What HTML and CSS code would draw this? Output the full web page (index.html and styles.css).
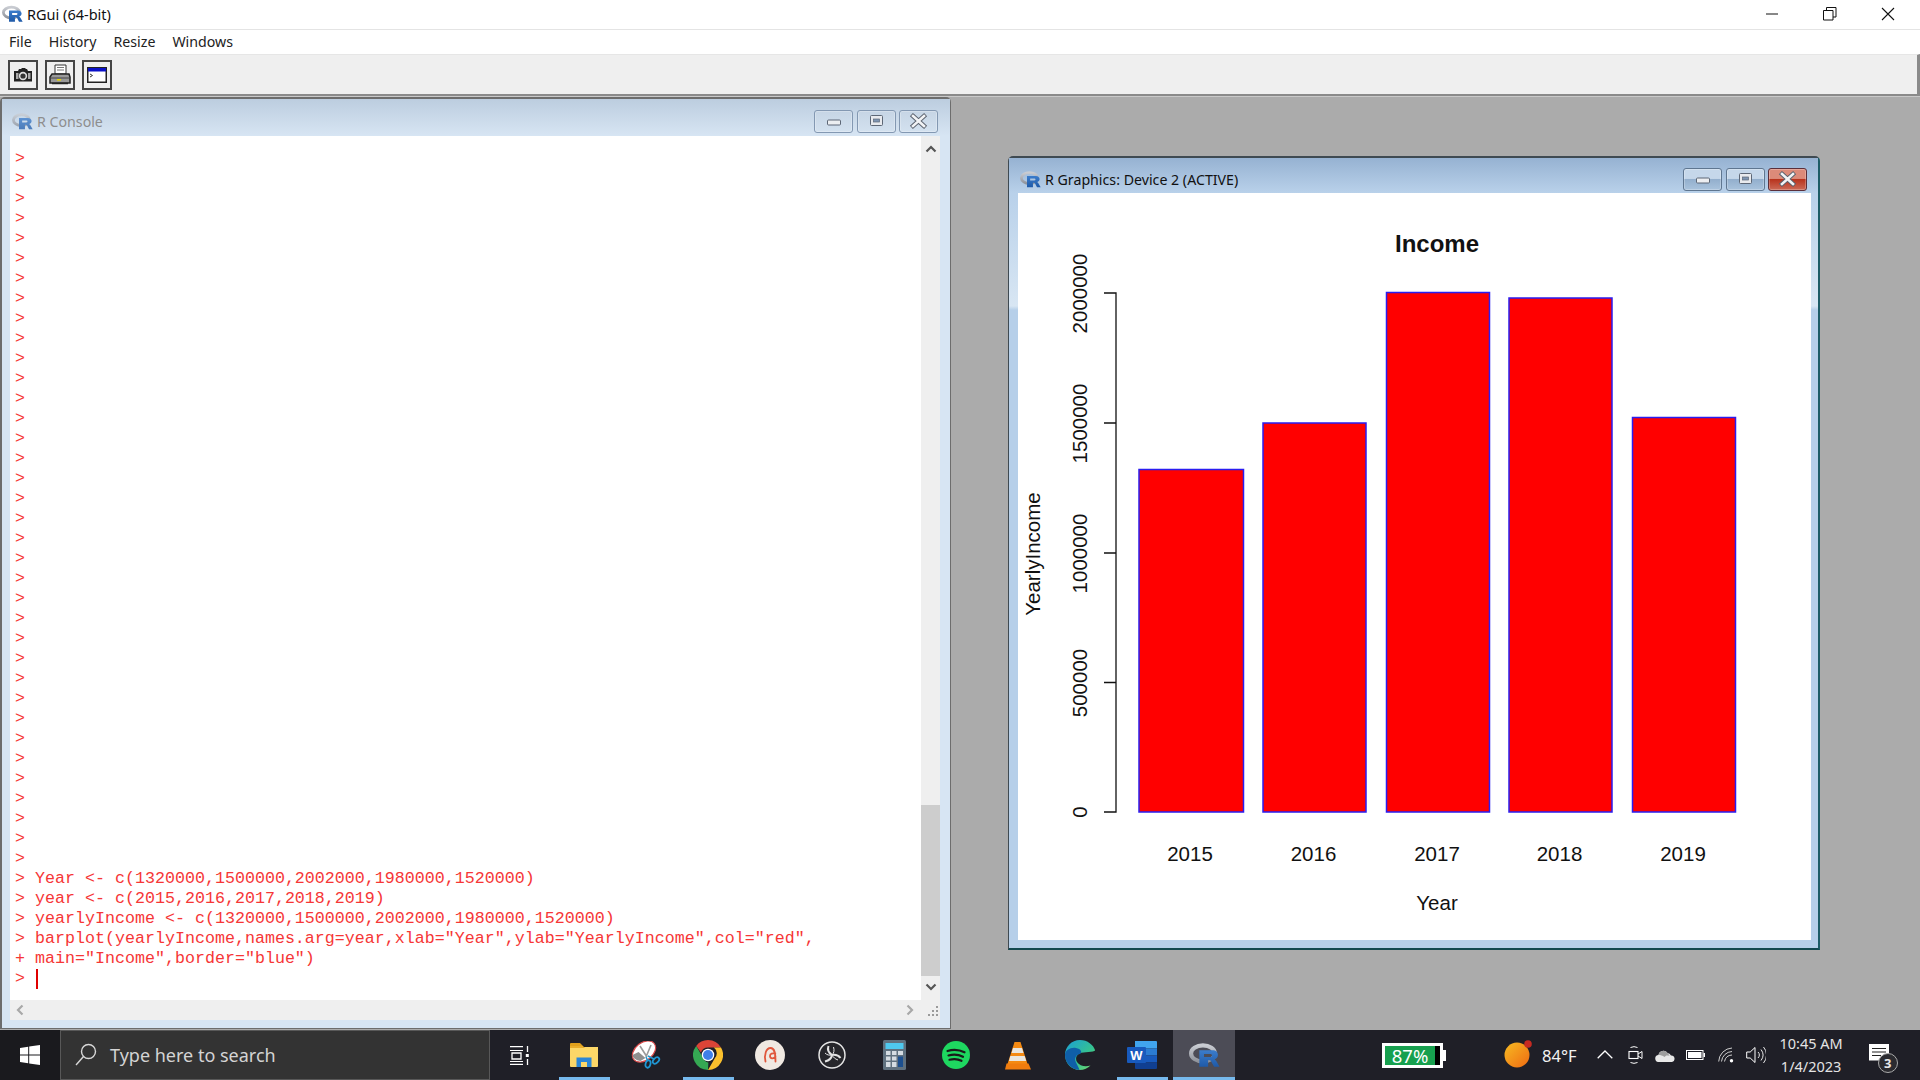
FILE: index.html
```html
<!DOCTYPE html>
<html lang="en">
<head>
<meta charset="utf-8">
<title>RGui (64-bit)</title>
<link rel="stylesheet" href="styles.css">
</head>
<body>
<svg class="defs" width="0" height="0" aria-hidden="true">
  <defs>
    <linearGradient id="ring" x1="0" y1="0" x2="0" y2="1"><stop offset="0" stop-color="#c9ccd2"/><stop offset="1" stop-color="#8f939b"/></linearGradient>
    <linearGradient id="blueR" x1="0" y1="0" x2="0" y2="1"><stop offset="0" stop-color="#3b7ccb"/><stop offset="1" stop-color="#1f5aa8"/></linearGradient>
    <symbol id="rlogo" viewBox="0 0 30 24">
      <ellipse cx="13.500" cy="10" rx="11.500" ry="7.800" fill="none" stroke="url(#ring)" stroke-width="4"/>
      <path fill="url(#blueR)" fill-rule="evenodd" d="M10 7h12.500c3.700 0 5.500 2 5.500 4.400 0 2.200-1.400 3.700-3.500 4.200 1 .5 1.600 1.300 2.200 2.300l2.800 5.100h-5.200l-2.600-4.800c-.6-1.100-1.200-1.500-2.200-1.500h-1v6.300H10V7zm4.500 3.500v2.900h5.700c1.200 0 2-.5 2-1.500 0-.9-.8-1.400-2-1.400z"/>
    </symbol>
    <symbol id="g-min" viewBox="0 0 39 23"><rect x="13.500" y="10" width="13" height="5" rx="1" fill="#eceef1" stroke="#5d6776"/></symbol>
    <symbol id="g-max" viewBox="0 0 39 23"><rect x="13.500" y="5.500" width="12" height="10" rx="1" fill="#e8eaee" stroke="#5d6776"/><rect x="16.500" y="9" width="6" height="3" fill="#7f95b3" stroke="#5d6776" stroke-width=".7"/></symbol>
    <symbol id="g-close" viewBox="0 0 39 23"><path d="M14 6l11 10M25 6L14 16" stroke="#59606c" stroke-width="4.400" stroke-linecap="square"/><path d="M14 6l11 10M25 6L14 16" stroke="#f2f3f5" stroke-width="2.600" stroke-linecap="square"/></symbol>
  </defs>
</svg>

<header class="app-title">
  <svg class="icon-app" aria-hidden="true"><use href="#rlogo"/></svg>
  <span class="app-name">RGui (64-bit)</span>
  <div class="caption-btns">
    <svg class="cap" width="14" height="14" viewBox="0 0 14 14" aria-hidden="true"><path d="M1 7h12" stroke="#111" stroke-width="1"/></svg>
    <svg class="cap" width="14" height="14" viewBox="0 0 14 14" aria-hidden="true"><path d="M.5 3.500h9.500v9.500H.5zM3.500 3.500V.5H13v9.500h-3" fill="none" stroke="#111"/></svg>
    <svg class="cap" width="14" height="14" viewBox="0 0 14 14" aria-hidden="true"><path d="M1 1l12 12M13 1L1 13" stroke="#111" stroke-width="1.100"/></svg>
  </div>
</header>

<nav class="menu">
  <span class="menu-item">File</span>
  <span class="menu-item">History</span>
  <span class="menu-item">Resize</span>
  <span class="menu-item">Windows</span>
</nav>

<div class="toolbar">
  <div class="tool">
    <svg width="20" height="16" viewBox="0 0 20 16" aria-hidden="true"><path d="M1 4h4l1-2h2l1-1h3l1 1h1l1 2h4v10.500H1z" fill="#222"/><circle cx="10" cy="9" r="4.200" fill="#ddd"/><circle cx="10" cy="9" r="2.600" fill="#333"/><rect x="3" y="6" width="2.500" height="6" fill="#aaa"/><rect x="15" y="6" width="2.500" height="6" fill="#aaa"/></svg>
  </div>
  <div class="tool">
    <svg width="22" height="22" viewBox="0 0 22 22" aria-hidden="true"><path d="M6 1h11v9H6z" fill="#fff" stroke="#333"/><path d="M8 3.500h7M8 6h7" stroke="#777"/><path d="M3 10h17l1 3v6H1v-6z" fill="#999" stroke="#222" stroke-width="1.500"/><path d="M2 14h18" stroke="#444"/><rect x="8" y="15" width="4" height="1.600" fill="#e8d800"/><path d="M3 19.500h16" stroke="#222" stroke-width="1.500"/></svg>
  </div>
  <div class="tool">
    <svg width="20" height="16" viewBox="0 0 20 16" aria-hidden="true"><rect x=".75" y=".75" width="18.500" height="14.500" fill="#fff" stroke="#222" stroke-width="1.500"/><rect x="1" y="1" width="18" height="3.500" fill="#0a10c8"/><path d="M3 7l2.500 1.500L3 10" fill="none" stroke="#333"/></svg>
  </div>
</div>

<main class="desktop">
  <section class="window window-console">
    <div class="win-title">
      <svg class="icon-win faded" aria-hidden="true"><use href="#rlogo"/></svg>
      <span class="win-name muted">R Console</span>
      <div class="win-btns">
        <div class="wbtn"><svg aria-hidden="true"><use href="#g-min"/></svg></div>
        <div class="wbtn"><svg aria-hidden="true"><use href="#g-max"/></svg></div>
        <div class="wbtn"><svg aria-hidden="true"><use href="#g-close"/></svg></div>
      </div>
    </div>
    <div class="console-body">
      <div class="console-row">
        <div class="console-text">
          <div class="line">&gt;</div><div class="line">&gt;</div><div class="line">&gt;</div><div class="line">&gt;</div>
          <div class="line">&gt;</div><div class="line">&gt;</div><div class="line">&gt;</div><div class="line">&gt;</div>
          <div class="line">&gt;</div><div class="line">&gt;</div><div class="line">&gt;</div><div class="line">&gt;</div>
          <div class="line">&gt;</div><div class="line">&gt;</div><div class="line">&gt;</div><div class="line">&gt;</div>
          <div class="line">&gt;</div><div class="line">&gt;</div><div class="line">&gt;</div><div class="line">&gt;</div>
          <div class="line">&gt;</div><div class="line">&gt;</div><div class="line">&gt;</div><div class="line">&gt;</div>
          <div class="line">&gt;</div><div class="line">&gt;</div><div class="line">&gt;</div><div class="line">&gt;</div>
          <div class="line">&gt;</div><div class="line">&gt;</div><div class="line">&gt;</div><div class="line">&gt;</div>
          <div class="line">&gt;</div><div class="line">&gt;</div><div class="line">&gt;</div><div class="line">&gt;</div>
          <div class="line">&gt; Year &lt;- c(1320000,1500000,2002000,1980000,1520000)</div>
          <div class="line">&gt; year &lt;- c(2015,2016,2017,2018,2019)</div>
          <div class="line">&gt; yearlyIncome &lt;- c(1320000,1500000,2002000,1980000,1520000)</div>
          <div class="line">&gt; barplot(yearlyIncome,names.arg=year,xlab="Year",ylab="YearlyIncome",col="red",</div>
          <div class="line">+ main="Income",border="blue")</div>
          <div class="line">&gt; <span class="caret"></span></div>
        </div>
        <div class="vscroll">
          <svg class="arrow-up" width="12" height="8" viewBox="0 0 12 8" aria-hidden="true"><path d="M1.500 6.500L6 2l4.500 4.500" fill="none" stroke="#555" stroke-width="2.200"/></svg>
          <div class="vtrack"><div class="vthumb"></div></div>
          <svg class="arrow-down" width="12" height="8" viewBox="0 0 12 8" aria-hidden="true"><path d="M1.500 1.500L6 6l4.500-4.500" fill="none" stroke="#555" stroke-width="2.200"/></svg>
        </div>
      </div>
      <div class="hscroll">
        <svg width="8" height="12" viewBox="0 0 8 12" aria-hidden="true"><path d="M6.500 1.500L2 6l4.500 4.500" fill="none" stroke="#a8a8a8" stroke-width="2.200"/></svg>
        <svg class="arrow-right" width="8" height="12" viewBox="0 0 8 12" aria-hidden="true"><path d="M1.500 1.500L6 6l-4.500 4.500" fill="none" stroke="#a8a8a8" stroke-width="2.200"/></svg>
        <svg class="grip" width="11" height="11" viewBox="0 0 11 11" aria-hidden="true"><path d="M8 1h2v2H8zM4 5h2v2H4zM8 5h2v2H8zM0 9h2v2H0zM4 9h2v2H4zM8 9h2v2H8z" fill="#9a9a9a"/></svg>
      </div>
    </div>
  </section>

  <section class="window window-graphics">
    <div class="win-title active">
      <svg class="icon-win" aria-hidden="true"><use href="#rlogo"/></svg>
      <span class="win-name">R Graphics: Device 2 (ACTIVE)</span>
      <div class="win-btns">
        <div class="wbtn on"><svg aria-hidden="true"><use href="#g-min"/></svg></div>
        <div class="wbtn on"><svg aria-hidden="true"><use href="#g-max"/></svg></div>
        <div class="wbtn on close"><svg aria-hidden="true"><use href="#g-close"/></svg></div>
      </div>
    </div>
    <div class="plot-pane">
      <svg class="plot" viewBox="1018 193 793 747" width="793" height="747" role="img" aria-label="Income barplot">
        <g class="bars">
          <rect x="1139" y="469.500" width="104.500" height="342.500"/>
          <rect x="1263" y="423" width="103" height="389"/>
          <rect x="1386.500" y="292.500" width="103" height="519.500"/>
          <rect x="1509" y="298" width="103" height="514"/>
          <rect x="1632.500" y="417.500" width="103" height="394.500"/>
        </g>
        <path class="axis" d="M1104 293h12v519h-12M1104 423h12M1104 553h12M1104 682.500h12"/>
        <text class="p-title" x="1437" y="252">Income</text>
        <text class="p-tick" x="1190" y="861">2015</text>
        <text class="p-tick" x="1313.500" y="861">2016</text>
        <text class="p-tick" x="1437" y="861">2017</text>
        <text class="p-tick" x="1559.500" y="861">2018</text>
        <text class="p-tick" x="1683" y="861">2019</text>
        <text class="p-tick" x="1437" y="910">Year</text>
        <text class="p-tick" transform="translate(1087 293.500) rotate(-90)">2000000</text>
        <text class="p-tick" transform="translate(1087 423.500) rotate(-90)">1500000</text>
        <text class="p-tick" transform="translate(1087 553.500) rotate(-90)">1000000</text>
        <text class="p-tick" transform="translate(1087 683) rotate(-90)">500000</text>
        <text class="p-tick" transform="translate(1087 812) rotate(-90)">0</text>
        <text class="p-tick" transform="translate(1040 554) rotate(-90)">YearlyIncome</text>
      </svg>
    </div>
  </section>
</main>

<footer class="taskbar">
  <div class="start">
    <svg width="20" height="20" viewBox="0 0 20 20" aria-hidden="true"><path d="M0 2.900l8.200-1.200v7.800H0zM9.200 1.600L20 0v9.500H9.200zM0 10.500h8.200v7.800L0 17.100zM9.200 10.500H20V20L9.200 18.400z" fill="#fff"/></svg>
  </div>
  <div class="search">
    <svg width="22" height="24" viewBox="0 0 22 24" aria-hidden="true"><circle cx="13.500" cy="8.500" r="7" fill="none" stroke="#d8d8d8" stroke-width="1.400"/><path d="M8.500 13.500L1 22" stroke="#d8d8d8" stroke-width="1.400"/></svg>
    <span class="search-text">Type here to search</span>
  </div>
  <div class="tasks">
    <div class="task shift-left">
      <svg width="20" height="19" viewBox="0 0 20 19" aria-hidden="true"><path d="M1 .5h13M1 18.500h13M3 7h9v6H3z" fill="none" stroke="#fff" stroke-width="1.300"/><path d="M1 4.500h13M1 15.500h13" stroke="#fff" stroke-width="1"/><path d="M18.500 0v6M18.500 13v6" stroke="#fff" stroke-width="1.300"/><rect x="16.800" y="8" width="3" height="3" fill="#fff"/></svg>
    </div>
    <div class="task open">
      <svg width="28" height="24" viewBox="0 0 28 24" aria-hidden="true"><path d="M0 1a1 1 0 0 1 1-1h9l3 3h-13z" fill="#e0a01c"/><path d="M0 4h28v19a1 1 0 0 1-1 1H1a1 1 0 0 1-1-1z" fill="#fcd768"/><path d="M0 3h13l2 2H0z" fill="#e9ad2b"/><path d="M6.500 24v-9.500h15V24h-4.500v-5h-6v5z" fill="#2b86d6"/><rect x="11" y="19" width="6" height="5" fill="#fcd768"/></svg>
    </div>
    <div class="task">
      <svg width="30" height="28" viewBox="0 0 30 28" aria-hidden="true"><ellipse cx="13" cy="10.500" rx="13" ry="8.800" transform="rotate(-38 13 10.500)" fill="#fff" stroke="#d84a4a" stroke-width="1.200"/><path d="M1.500 14a10 6 0 0 0 8 6l5-3-7-6z" fill="#8f8f8f"/><path d="M9 5l7 11M20 4l-5 12" stroke="#9a9a9a" stroke-width="1.600"/><ellipse cx="17" cy="23" rx="2.400" ry="3.800" fill="none" stroke="#1f97d4" stroke-width="1.800" transform="rotate(15 17 23)"/><ellipse cx="25" cy="19.500" rx="2.400" ry="3.800" fill="none" stroke="#1f97d4" stroke-width="1.800" transform="rotate(45 25 19.500)"/><path d="M15 16l2 4M17 15l6 3" stroke="#1f97d4" stroke-width="1.600"/></svg>
    </div>
    <div class="task open">
      <svg width="30" height="30" viewBox="0 0 48 48" aria-hidden="true"><path d="M24 0a24 24 0 0 1 20.800 12H24a12 12 0 0 0-11.300 8L5.100 9.400A24 24 0 0 1 24 0z" fill="#db4437"/><path d="M44.800 12A24 24 0 0 1 24 48l10.400-18a12 12 0 0 0-1-18z" fill="#fbc02d"/><path d="M24 48A24 24 0 0 1 5.100 9.400l10.500 18.200A12 12 0 0 0 24 36h.6L24 48z" fill="#35a853"/><circle cx="24" cy="24" r="10" fill="#fff"/><circle cx="24" cy="24" r="8" fill="#3f7fe8"/></svg>
    </div>
    <div class="task">
      <svg width="30" height="30" viewBox="0 0 30 30" aria-hidden="true"><circle cx="15" cy="15" r="15" fill="#f0e9e2"/><path d="M10.500 21.500C9 15 11 8 15.500 8S20.500 14 20.500 21.500M20.500 16.500c-1.500 2.500-5.500 2.500-5.500-.5 0-2.500 2.500-3 5.300-2.500" fill="none" stroke="#e0573c" stroke-width="1.800" stroke-linecap="round"/></svg>
    </div>
    <div class="task">
      <svg width="28" height="28" viewBox="0 0 28 28" aria-hidden="true"><circle cx="14" cy="14" r="13" fill="#26262b" stroke="#e4e4e4" stroke-width="1.500"/><path d="M14 14C11 12 9 9 10.500 5M14 14c3.500-.5 6-.5 8.500 3M14 14c-.5 3.500-3 5.500-7 6.500" fill="none" stroke="#e4e4e4" stroke-width="2"/><path d="M14 14c-3 .5-5 0-7-2M14 14c2-2 2.500-4.500 1.500-8M14 14c1.500 2.500 3 4 6 5" fill="none" stroke="#e4e4e4" stroke-width="1"/></svg>
    </div>
    <div class="task">
      <svg width="23" height="30" viewBox="0 0 23 30" aria-hidden="true"><rect width="23" height="30" rx="1.500" fill="#60717f"/><rect x="2.500" y="3" width="18" height="6" fill="#4fc9ef"/><path d="M3 11h4.500v4H3zM9 11h4.500v4H9zM15 11h5v4h-5zM3 16.500h4.500v4H3zM9 16.500h4.500v4H9zM3 22h4.500v5H3zM9 22h4.500v5H9z" fill="#d5dce2"/><rect x="15" y="16.500" width="5" height="10.500" fill="#1c4f8f"/></svg>
    </div>
    <div class="task">
      <svg width="28" height="28" viewBox="0 0 28 28" aria-hidden="true"><circle cx="14" cy="14" r="14" fill="#1ed760"/><path d="M5.500 10c6-1.800 12-1.200 17 1.300M6.500 14.500c5-1.400 10-1 14.500 1.300M7.500 18.700c4-1 8.500-.8 12 1.100" fill="none" stroke="#1a1a1a" stroke-width="2.200" stroke-linecap="round"/></svg>
    </div>
    <div class="task">
      <svg width="26" height="29" viewBox="0 0 26 29" aria-hidden="true"><path d="M9.500 1h6l7.500 23.500H2z" fill="#f58a12"/><path d="M8 7h9l1.500 5H6.500zM5.300 15h14.400l1.500 5H4z" fill="#e9e6df"/><path d="M1.500 22.500h22L26 28.500H0z" fill="#f07c0e"/></svg>
    </div>
    <div class="task">
      <svg width="30" height="30" viewBox="0 0 30 30" aria-hidden="true"><defs><linearGradient id="edge" x1="0" y1="0" x2="1" y2="1"><stop offset="0" stop-color="#1a9ed8"/><stop offset=".6" stop-color="#36c38f"/><stop offset="1" stop-color="#7fdc6a"/></linearGradient></defs><path d="M15 0C6.500 0 0 6.800 0 15c0 8.500 6.800 15 14.500 15 4.500 0 8.500-1.800 11-4.500-5 1.500-11 .5-13.500-3.500-1.800-3-1-7 2.500-8.500 4.500-2 16.500-.8 15.500-3.500C28.500 5 22.500 0 15 0z" fill="url(#edge)"/><path d="M0 15c0-5 6-8 11-7 5 1 6.500 4 4 6-4 .5-6 4.500-4 8.500 1.500 3 3 6 3.500 7.500C7 29.500 0 23.500 0 15z" fill="#0f5fa8"/></svg>
    </div>
    <div class="task open">
      <svg width="30" height="28" viewBox="0 0 30 28" aria-hidden="true"><path d="M8 0h21a1 1 0 0 1 1 1v6.500H8z" fill="#41a5ee"/><rect x="8" y="7.500" width="22" height="7" fill="#2b7cd3"/><rect x="8" y="14.500" width="22" height="7" fill="#185abd"/><path d="M8 21.500h22V27a1 1 0 0 1-1 1H9a1 1 0 0 1-1-1z" fill="#103f91"/><rect y="6" width="19" height="16" rx="1" fill="#185abd"/><text class="word-w" x="9.500" y="19">W</text></svg>
    </div>
    <div class="task open current">
      <svg class="icon-task" aria-hidden="true"><use href="#rlogo"/></svg>
    </div>
  </div>
  <div class="tray">
    <div class="battery-widget">
      <div class="batt-body"><span class="batt-fill">87%</span><span class="batt-rest"></span></div>
      <span class="batt-nub"></span>
    </div>
    <svg class="sun" width="30" height="28" viewBox="0 0 30 28" aria-hidden="true"><defs><linearGradient id="sun" x1="0" y1="0" x2="1" y2="1"><stop offset="0" stop-color="#f7bb22"/><stop offset="1" stop-color="#ef6a12"/></linearGradient></defs><circle cx="13" cy="15" r="12.500" fill="url(#sun)"/><circle cx="24" cy="4" r="3.800" fill="#c62a22"/></svg>
    <span class="temp">84°F</span>
    <svg class="t-chev" width="16" height="9" viewBox="0 0 16 9" aria-hidden="true"><path d="M.7 8.300L8 1l7.300 7.300" fill="none" stroke="#fff" stroke-width="1.300"/></svg>
    <svg class="t-meet" width="15" height="20" viewBox="0 0 15 20" aria-hidden="true"><path d="M2.500 2.500a8 8 0 0 1 7 0M2.500 17.500a8 8 0 0 0 7 0" fill="none" stroke="#fff"/><rect x="1" y="6.500" width="9" height="7" fill="none" stroke="#fff" stroke-width="1.100"/><path d="M10 9l4-2.500v7L10 11" fill="none" stroke="#fff"/></svg>
    <svg class="t-cloud" width="20" height="13" viewBox="0 0 20 13" aria-hidden="true"><path d="M4 13a3.500 3.500 0 0 1-.5-7 5 5 0 0 1 9-2 4.500 4.500 0 0 1 3.500 2.500 3.300 3.300 0 0 1 1 6.500z" fill="#e8e8e8"/><path d="M3.500 6a5 5 0 0 1 9-2c1 1 2 2.500 2 3-3-1-4 0-5 1-2-1.500-4-2-6-2z" fill="#9e9e9e"/></svg>
    <svg class="t-batt" width="19" height="10" viewBox="0 0 19 10" aria-hidden="true"><rect x=".5" y=".5" width="16.500" height="9" fill="none" stroke="#fff"/><rect x="2" y="2" width="13.500" height="6" fill="#fff"/><rect x="17.500" y="3" width="1.500" height="4" fill="#fff"/></svg>
    <svg class="t-wifi" width="16" height="16" viewBox="0 0 16 16" aria-hidden="true"><path d="M.7 14.500A14 14 0 0 1 14 1M3.500 14.500A11 11 0 0 1 14 4.500M6.500 14.500A8 8 0 0 1 14 8" fill="none" stroke="#cfcfcf" stroke-width="1"/><circle cx="13.500" cy="13.800" r="1.700" fill="#fff"/></svg>
    <svg class="t-vol" width="20" height="18" viewBox="0 0 20 18" aria-hidden="true"><path d="M.7 6h3.500L9 1.500v15L4.200 12H.7z" fill="none" stroke="#fff"/><path d="M12 6a4 4 0 0 1 0 6M15 3.500a9 9 0 0 1 0 11M17.500 1a12 12 0 0 1 0 16" fill="none" stroke="#e8e8e8"/></svg>
    <div class="clock"><span>10:45 AM</span><span>1/4/2023</span></div>
    <div class="notify">
      <svg width="20" height="17" viewBox="0 0 20 17" aria-hidden="true"><path d="M0 0h20v16.500H0z" fill="#fff"/><path d="M3 4.500h14M3 8h14M3 11.500h9" stroke="#222" stroke-width="1.200"/></svg>
      <span class="badge">3</span>
    </div>
  </div>
</footer>
</body>
</html>
```

FILE: styles.css
```css
* { box-sizing: border-box; }
html, body { margin: 0; height: 100%; }
body {
  width: 1920px;
  height: 1080px;
  display: flex;
  flex-direction: column;
  overflow: hidden;
  font-family: "Noto Sans", "Open Sans", sans-serif;
  background: #ababab;
}
.defs { position: absolute; }

/* App chrome */
.app-title {
  height: 30px;
  flex: none;
  display: flex;
  align-items: center;
  background: #fff;
  border-bottom: 1px solid #e4e4e4;
  padding: 0 0 2px 2px;
}
.icon-app { width: 21px; height: 18px; margin-right: 4px; }
.app-name { font-size: 14.500px; color: #111; }
.caption-btns { margin-left: auto; display: flex; gap: 44px; padding-right: 25px; }
.cap { display: block; }

.menu {
  height: 24px;
  flex: none;
  display: flex;
  align-items: center;
  gap: 17px;
  padding: 0 0 2px 9px;
  background: #fff;
  font-size: 14.200px;
  color: #222;
}

.toolbar {
  height: 42px;
  flex: none;
  display: flex;
  align-items: center;
  gap: 7px;
  padding-left: 8px;
  background: #efefef;
  border-top: 1px solid #e6e6e6;
  border-bottom: 2px solid #8a8a8a;
  border-right: 3px solid #8a8a8a;
  margin-bottom: 1px;
  box-shadow: 0 1px 0 #c9c9c9;
}
.tool {
  width: 30px;
  height: 30px;
  display: flex;
  align-items: center;
  justify-content: center;
  border: 2px solid #454545;
  background: #efefef;
}
.tool svg { display: block; }

/* MDI workspace */
.desktop {
  flex: 1;
  min-height: 0;
  position: relative;
  background: #ababab;
}
.window {
  position: absolute;
  display: flex;
  flex-direction: column;
  border-radius: 5px 5px 0 0;
}
.window-console {
  left: 0;
  top: 0;
  width: 951px;
  height: 932px;
  background: #d7e5f3;
  border: 1px solid #6d6d6d;
  border-width: 2px 1px 1px 2px;
  padding: 0 10px 8px 8px;
}
.window-graphics {
  left: 1008px;
  top: 59px;
  width: 812px;
  height: 794px;
  background: linear-gradient(#b9d1ea 37px, #d8e6f3 148px, #b6cfe9 152px);
  border: 1px solid #3f4a52;
  border-width: 2px 2px 2px 1px;
  border-right-color: #1d5c66;
  border-bottom-color: #12484f;
  padding: 0 7px 8px 9px;
}
.win-title {
  height: 37px;
  flex: none;
  display: flex;
  align-items: center;
  margin: 0 -10px 0 -8px;
  padding: 7px 12px 0 10px;
  background: linear-gradient(#bccddf, #d7e5f3);
}
.win-title.active {
  height: 35px;
  margin: 0 -7px 0 -9px;
  padding: 7px 11px 0 11px;
  background: linear-gradient(#96b2d2, #b9d1ea);
}
.icon-win { width: 21px; height: 17px; margin-right: 4px; }
.faded { opacity: .75; }
.win-name { font-size: 14.200px; color: #111; }
.win-name.muted { color: #8e8e8e; }
.win-btns { margin-left: auto; display: flex; gap: 3.500px; }
.wbtn {
  width: 39px;
  height: 23px;
  border: 1px solid #8398b2;
  border-radius: 3px;
  background: linear-gradient(#c6d5e5, #d3e1ef);
  box-shadow: inset 0 0 0 1px rgba(255,255,255,.25);
  position: relative;
}
.wbtn svg { position: absolute; left: -1px; top: -1px; width: 39px; height: 23px; }
.wbtn.on {
  border-color: #5f7690;
  background: linear-gradient(#c5d7ea 0 45%, #93afcd 50%, #a9c3dd 100%);
}
.wbtn.close {
  border-color: #5b2f3a;
  background: linear-gradient(#dc8a79 0 45%, #b8341e 50%, #cc6a57 100%);
}

/* Console */
.console-body { flex: 1; min-height: 0; display: flex; flex-direction: column; }
.console-row { flex: 1; min-height: 0; display: flex; }
.console-text {
  flex: 1;
  min-width: 0;
  background: #fff;
  padding: 13px 0 0 5px;
  font-family: "Liberation Mono", monospace;
  font-size: 16.670px;
  line-height: 20px;
  color: #f63636;
}
.line { height: 20px; white-space: pre; }
.caret { display: inline-block; width: 2px; height: 20px; background: #e00000; margin-left: 1px; vertical-align: top; }
.vscroll {
  width: 19px;
  flex: none;
  background: #efefef;
  display: flex;
  flex-direction: column;
  align-items: center;
}
.arrow-up { margin-top: 9px; flex: none; }
.vtrack { flex: 1; width: 100%; display: flex; flex-direction: column; justify-content: flex-end; margin-top: 0; }
.vthumb { height: 171px; background: #cdcdcd; margin-bottom: 7px; }
.arrow-down { margin-bottom: 9px; flex: none; }
.hscroll {
  height: 20px;
  flex: none;
  background: #efefef;
  display: flex;
  align-items: center;
  padding-left: 6px;
  padding-right: 1px;
}
.arrow-right { margin-left: auto; margin-right: 14px; }
.grip { margin-right: 0; }

/* Graphics */
.plot-pane { flex: 1; min-height: 0; background: #fff; overflow: hidden; }
.plot { display: block; }
.bars rect { fill: #ff0000; stroke: #2a1cf0; stroke-width: 1.500; }
.axis { fill: none; stroke: #111; stroke-width: 1.300; }
.plot text { font-family: "Liberation Sans", Arial, sans-serif; text-anchor: middle; fill: #111; }
.p-title { font-size: 24px; font-weight: 700; }
.p-tick { font-size: 20.500px; }

/* Taskbar */
.taskbar {
  height: 50px;
  flex: none;
  display: flex;
  align-items: stretch;
  background: #1f1f27;
  color: #fff;
}
.start {
  width: 60px;
  flex: none;
  display: flex;
  align-items: center;
  justify-content: center;
  background: #1a1a1e;
}
.search {
  width: 430px;
  flex: none;
  display: flex;
  align-items: center;
  gap: 13px;
  padding-left: 14px;
  background: #333;
  border: 1px solid #585858;
}
.search-text { font-size: 18px; color: #d4d4d4; }
.tasks { display: flex; margin-left: 1px; }
.task {
  width: 62px;
  display: flex;
  align-items: center;
  justify-content: center;
  position: relative;
}
.task svg { display: block; }
.shift-left { padding-right: 6px; }
.task.open::after {
  content: "";
  position: absolute;
  left: 5.500px;
  right: 5.500px;
  bottom: 0;
  height: 3px;
  background: #76b9ed;
}
.task.current { background: #4c4c56; }
.task.current::after { left: 0; right: 0; }
.icon-task { width: 31px; height: 25px; }
.word-w { font-family: "Liberation Sans", sans-serif; font-size: 13px; font-weight: 700; fill: #fff; text-anchor: middle; }

.tray { margin-left: auto; display: flex; align-items: center; width: 540px; padding-left: 1px; }
.battery-widget { display: flex; align-items: center; margin-left: 1px; }
.batt-body {
  width: 61px;
  height: 25px;
  display: flex;
  border: 3px solid #fff;
  background: #000;
}
.batt-fill {
  width: 50px;
  background: #17a04f;
  color: #fff;
  font-size: 18.500px;
  line-height: 19px;
  text-align: center;
}
.batt-nub { width: 3px; height: 11px; background: #fff; }
.sun { margin-left: 58px; margin-top: -2px; }
.temp { font-size: 16.500px; margin-left: 8px; color: #f2f2f2; }
.t-chev { margin-left: 20px; margin-top: -2px; }
.t-meet { margin-left: 15px; }
.t-cloud { margin-left: 12px; }
.t-batt { margin-left: 11px; }
.t-wifi { margin-left: 13px; }
.t-vol { margin-left: 12px; }
.clock {
  margin-left: 14px;
  display: flex;
  flex-direction: column;
  align-items: center;
  gap: 2px;
  font-size: 14.500px;
  line-height: 21px;
  color: #e4e4e4;
}
.notify { margin-left: 26px; position: relative; width: 20px; height: 17px; margin-top: -5px; }
.notify svg { display: block; }
.badge {
  position: absolute;
  left: 9px;
  top: 9px;
  width: 20px;
  height: 20px;
  border-radius: 50%;
  background: #2b2b30;
  border: 1px solid #aaa;
  font-size: 13px;
  font-weight: 700;
  line-height: 18px;
  text-align: center;
  color: #e8e8e8;
}
```
